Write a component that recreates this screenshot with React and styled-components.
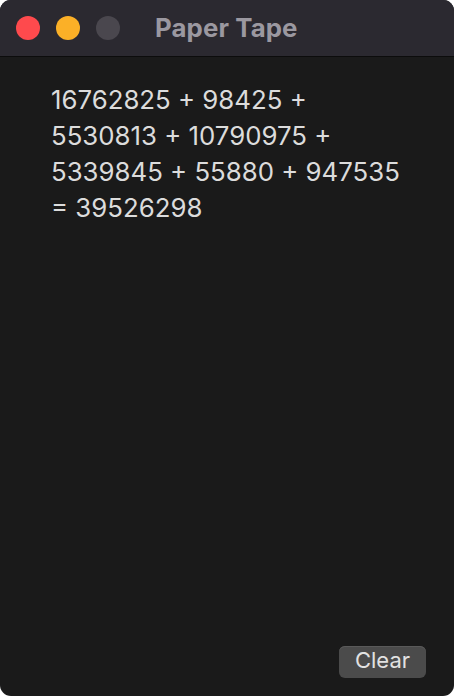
import React from 'react'
import styled, { createGlobalStyle } from 'styled-components'

const Global = createGlobalStyle`
  html, body {
    margin: 0;
    padding: 0;
    background: #ffffff;
  }
  body {
    font-family: Inter, "Noto Sans", "Liberation Sans", sans-serif;
  }
`

const Window = styled.div`
  width: 454px;
  height: 696px;
  background: #1a1a1a;
  border-radius: 11px;
  overflow: hidden;
  display: flex;
  flex-direction: column;
  box-sizing: border-box;
  box-shadow: inset 0 1px 0 #4a484e;
`

const TitleBar = styled.div`
  height: 57px;
  flex-shrink: 0;
  background: #2b2930;
  border-bottom: 1px solid #0c0c0c;
  display: flex;
  align-items: center;
  padding-left: 16px;
  box-sizing: border-box;
`

const Lights = styled.div`
  display: flex;
  gap: 16px;
`

const Light = styled.span`
  width: 24px;
  height: 24px;
  border-radius: 50%;
  background: ${p => p.color};
`

const Title = styled.div`
  margin-left: 35px;
  margin-bottom: 2px;
  font-size: 25.8px;
  font-weight: 700;
  color: #9b98a0;
  letter-spacing: 0.1px;
`

const Tape = styled.div`
  flex: 1;
  padding: 25px 30px 0 51px;
  font-size: 25.8px;
  line-height: 36px;
  color: #dcdcdc;
`

const Footer = styled.div`
  display: flex;
  justify-content: flex-end;
  padding: 0 28px 18px 0;
`

const Button = styled.button`
  width: 87px;
  height: 32px;
  border: none;
  border-radius: 6px;
  background: #4b4b4b;
  color: #e2e2e2;
  font-family: inherit;
  font-size: 22px;
  padding: 0 0 3px;
  line-height: 29px;
  box-shadow: inset 0 1px 0 #5a5a5a;
`

const lines = [
  '16762825 + 98425 +',
  '5530813 + 10790975 +',
  '5339845 + 55880 + 947535',
  '= 39526298',
]

const App = () => {
  return (
    <Window>
      <Global />
      <TitleBar>
        <Lights>
          <Light color="#fe4a4d" />
          <Light color="#fbb027" />
          <Light color="#4a474e" />
        </Lights>
        <Title>Paper Tape</Title>
      </TitleBar>
      <Tape>
        {lines.map(l => (
          <div key={l}>{l}</div>
        ))}
      </Tape>
      <Footer>
        <Button>Clear</Button>
      </Footer>
    </Window>
  )
}

export default App
